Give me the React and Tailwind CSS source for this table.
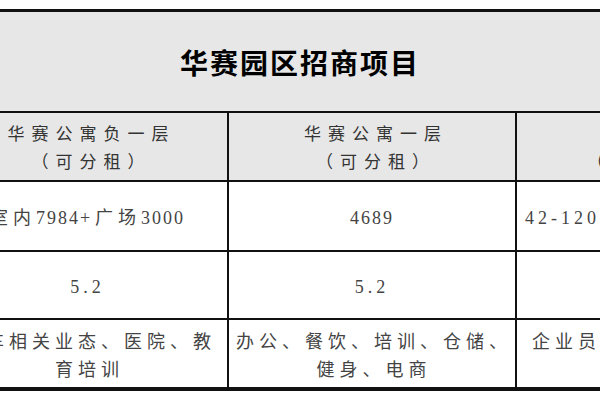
const serif = "'Liberation Serif', 'DejaVu Serif', serif";
const cellFont = { fontFamily: "'Liberation Serif', 'DejaVu Serif', 'Noto Sans CJK SC', serif" };

const Num = ({ children, className = 'tracking-[2px]' }) => (
  <span className={className} style={{ fontFamily: serif }}>
    {children}
  </span>
);

const HeadCell = ({ line1, line2, className = '' }) => (
  <div className={`bg-[#e7e7e7] flex flex-col items-center justify-center pt-[4px] text-[17px] leading-[28px] tracking-[7px] text-[#333] whitespace-nowrap ${className}`}>
    <div>{line1}</div>
    <div>{line2}</div>
  </div>
);

const Cell = ({ children, className = '' }) => (
  <div className={`bg-white flex flex-col justify-center text-[18px] leading-[28px] tracking-[5px] text-[#444] whitespace-nowrap ${className}`}>
    {children}
  </div>
);

const App = () => {
  return (
    <div className="w-[600px] h-[400px] overflow-hidden bg-white pt-[9px]">
      <div className="h-[102px] border-t-[3px] border-[#111] bg-[#e7e7e7] flex items-center justify-center">
        <h1
          className="text-[28px] font-bold tracking-[2px] text-black"
          style={{ fontFamily: "'Noto Sans CJK SC', sans-serif" }}
        >
          华赛园区招商项目
        </h1>
      </div>

      <div
        className="ml-[-52px] w-[900px] grid grid-cols-[279px_286px_331px] grid-rows-[67px_68px_66px_67px] gap-[2px] bg-[#111] border-t-2 border-b-4 border-[#111]"
        style={cellFont}
      >
        <HeadCell line1="华赛公寓负一层" line2="（可分租）" className="pl-[8px]" />
        <HeadCell line1="华赛公寓一层" line2="（可分租）" className="pl-[8px]" />
        <HeadCell line1="商铺" line2="（可分租）" className="pl-[8px] w-[252px]" />

        <Cell className="items-center pt-[4px]">
          <div>
            室内<Num>7984</Num>+广场<Num>3000</Num>
          </div>
        </Cell>
        <Cell className="items-center pt-[4px]">
          <div><Num>4689</Num></div>
        </Cell>
        <Cell className="items-start pl-[8px] pt-[4px]">
          <div>
            <Num className="tracking-[4px]">42-120</Num>平方米（多套可选）
          </div>
        </Cell>

        <Cell className="items-center pt-[4px]">
          <div><Num className="tracking-[4px]">5.2</Num></div>
        </Cell>
        <Cell className="items-center pt-[4px]">
          <div><Num className="tracking-[4px]">5.2</Num></div>
        </Cell>
        <Cell />

        <Cell className="items-center pl-[4px] pt-[4px]">
          <div>汽车相关业态、医院、教</div>
          <div>育培训</div>
        </Cell>
        <Cell className="items-center tracking-[4px] pl-[4px] pt-[4px]">
          <div>办公、餐饮、培训、仓储、</div>
          <div>健身、电商</div>
        </Cell>
        <Cell className="items-start pl-[15px] pt-[4px]">
          <div>企业员工宿舍、人才公寓</div>
          <div>&nbsp;</div>
        </Cell>
      </div>
    </div>
  );
};

export default App;
